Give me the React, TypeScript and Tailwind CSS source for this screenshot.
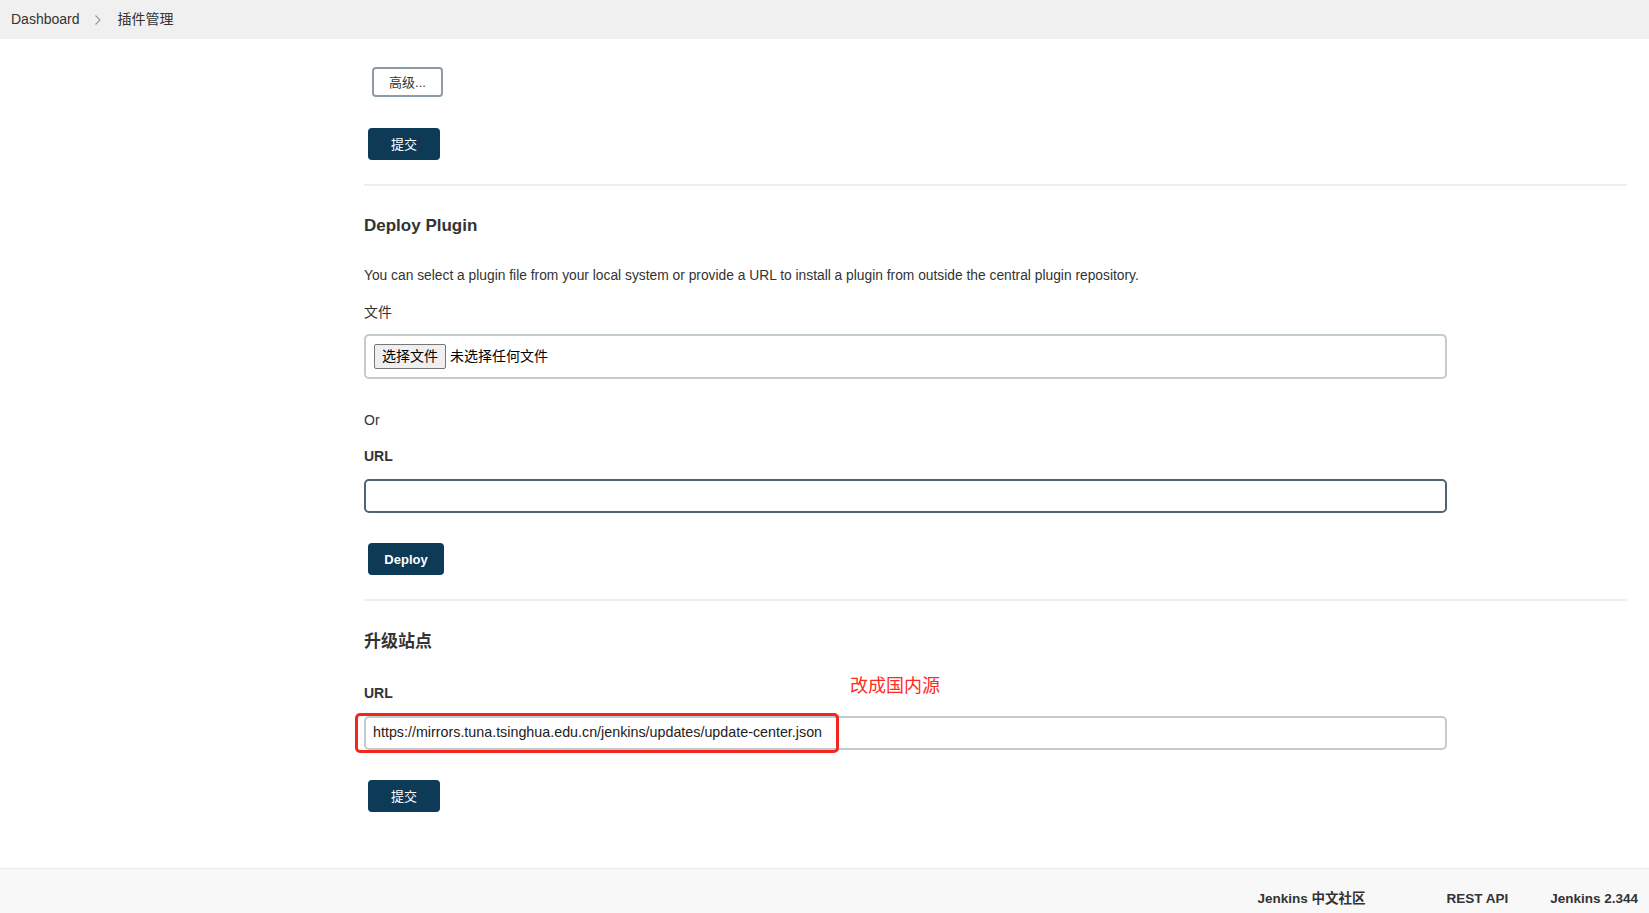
import React from 'react';

const font = { fontFamily: '"Liberation Sans", "Noto Sans CJK SC", sans-serif' };

const PrimaryButton: React.FC<{ label: string; width: string; bold?: boolean; className?: string }> = ({ label, width, bold, className }) => (
    <button
        className={`${width} h-[32px] ml-[4px] rounded-[4px] bg-[#0c3a57] text-white text-[13px] leading-none ${bold ? 'font-bold' : ''} ${className ?? ''}`}
    >
        {label}
    </button>
);

const Divider: React.FC<{ className?: string }> = ({ className }) => (
    <div className={`h-[2px] bg-[#eeeeee] ${className ?? ''}`}></div>
);

const App: React.FC = () => {
    return (
        <div style={font} className="min-h-screen bg-white text-[#333333] text-[14px]">
            {/* breadcrumb bar */}
            <div className="h-[39px] bg-[#f0f0f0] flex items-center pl-[11px] text-[14px] text-[#333]">
                <span>Dashboard</span>
                <svg className="ml-[14px] mr-[16px]" width="8" height="12" viewBox="0 0 8 12" fill="none">
                    <path d="M1.5 1.5 L6 6 L1.5 10.5" stroke="#9a9a9a" strokeWidth="1.2" />
                </svg>
                <span>插件管理</span>
            </div>

            <div className="flex">
                <div className="w-[364px] shrink-0"></div>
                <div className="flex-1 pr-[22px]">
                    <button className="mt-[28px] ml-[8px] w-[71px] h-[30px] rounded-[4px] border-2 border-[#8d9ba5] bg-white text-[13px] text-[#333] leading-none">
                        高级...
                    </button>
                    <div className="mt-[31px]">
                        <PrimaryButton label="提交" width="w-[72px]" />
                    </div>
                    <Divider className="mt-[24px]" />

                    <h2 className="mt-[28px] h-[24px] leading-[24px] text-[17px] font-bold">Deploy Plugin</h2>
                    <p className="mt-[28px] h-[20px] leading-[20px] text-[13.8px]">
                        You can select a plugin file from your local system or provide a URL to install a plugin from outside the central plugin repository.
                    </p>
                    <div className="mt-[16px] h-[20px] leading-[20px]">文件</div>
                    <div className="mt-[12px] w-[1083px] h-[45px] rounded-[5px] border-2 border-[#c2cbd0] flex items-center pl-[8px]">
                        <span className="h-[25px] px-[7px] flex items-center rounded-[2px] border border-[#767676] bg-[#efefef] text-[14px] text-black">
                            选择文件
                        </span>
                        <span className="ml-[4px] text-[14px] text-black">未选择任何文件</span>
                    </div>
                    <div className="mt-[31px] h-[20px] leading-[20px]">Or</div>
                    <div className="mt-[16px] h-[20px] leading-[20px] font-semibold">URL</div>
                    <div className="mt-[13px] w-[1083px] h-[34px] rounded-[5px] border-2 border-[#4c6577]"></div>
                    <div className="mt-[30px]">
                        <PrimaryButton label="Deploy" width="w-[76px]" bold />
                    </div>
                    <Divider className="mt-[24px]" />

                    <h2 className="mt-[29px] h-[24px] leading-[24px] text-[17px] font-bold">升级站点</h2>
                    <div className="relative mt-[29px] h-[20px] leading-[20px] font-semibold">
                        URL
                        <span className="absolute left-[486px] top-[-9px] text-[18px] font-normal text-[#ff2a1f] leading-[24px]">
                            改成国内源
                        </span>
                    </div>
                    <div className="relative mt-[13px] w-[1083px] h-[34px] rounded-[5px] border-2 border-[#c2cbd0] flex items-center pl-[7px] text-[14.3px] text-[#222]">
                        https://mirrors.tuna.tsinghua.edu.cn/jenkins/updates/update-center.json
                        <div className="absolute left-[-11px] top-[-5px] w-[484px] h-[40px] rounded-[5px] border-[3px] border-[#f5241c]"></div>
                    </div>
                    <div className="mt-[30px]">
                        <PrimaryButton label="提交" width="w-[72px]" />
                    </div>
                </div>
            </div>

            {/* footer */}
            <div className="mt-[56px] h-[45px] bg-[#f8f8f8] border-t border-[#ececec] flex items-start justify-end pt-[20px] pr-[11px] text-[13.5px] leading-[20px] font-semibold text-[#333]">
                <span>Jenkins 中文社区</span>
                <span className="ml-[81px]">REST API</span>
                <span className="ml-[42px]">Jenkins 2.344</span>
            </div>
        </div>
    );
};

export default App;
